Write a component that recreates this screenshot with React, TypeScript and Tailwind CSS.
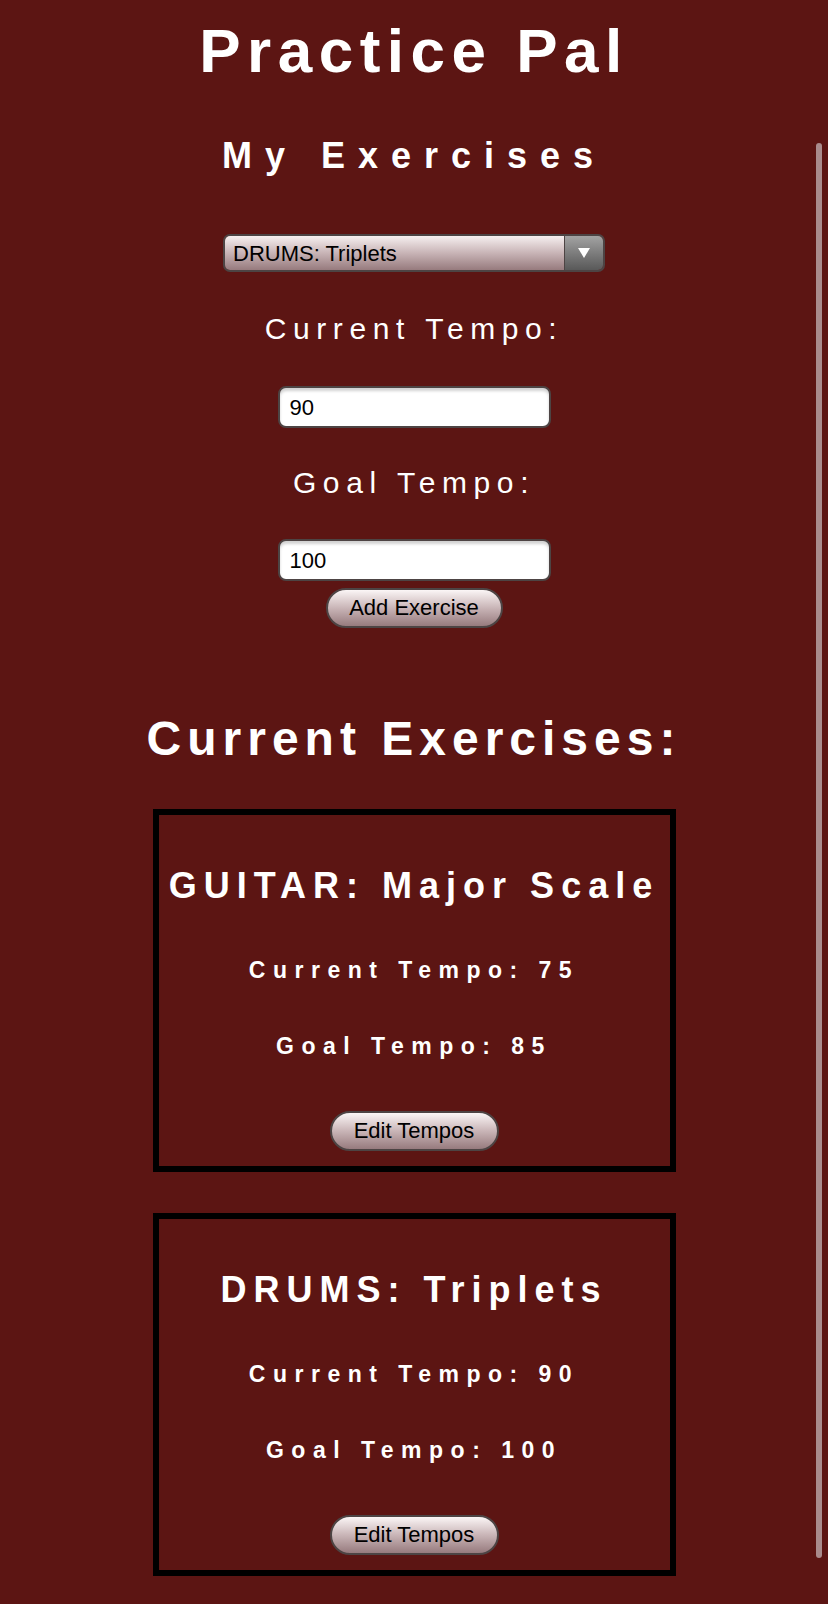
const exercises = [
  { name: "GUITAR: Major Scale", current: 75, goal: 85 },
  { name: "DRUMS: Triplets", current: 90, goal: 100 },
];

const font = "font-['Liberation_Sans',Arial,sans-serif]";

const GlossButton = ({ label, width }: { label: string; width: string }) => (
  <button
    className={`${width} h-[40px] rounded-full border-2 border-[#4d4444] bg-gradient-to-b from-[#fbf6f6] via-[#c9b5b7] to-[#977b7e] text-[22px] text-black leading-none`}
  >
    {label}
  </button>
);

const TempoInput = ({ value }: { value: string }) => (
  <div className="w-[273px] h-[42px] rounded-[8px] border-2 border-[#4d4444] bg-white shadow-[inset_0_3px_3px_rgba(0,0,0,0.18)] flex items-center pl-[10px] text-[22px] text-black">
    {value}
  </div>
);

const ExerciseCard = ({ name, current, goal }: { name: string; current: number; goal: number }) => (
  <section className="w-[523px] mx-auto border-[6px] border-black flex flex-col items-center pt-[51px] pb-[15px]">
    <h3 className="text-[36px] leading-[40px] font-bold tracking-[7px] text-white">{name}</h3>
    <p className="mt-[50px] text-[23px] leading-[28px] font-bold tracking-[7.5px] text-white">
      Current Tempo: {current}
    </p>
    <p className="mt-[48px] text-[23px] leading-[28px] font-bold tracking-[7.5px] text-white">
      Goal Tempo: {goal}
    </p>
    <div className="mt-[51px]">
      <GlossButton label="Edit Tempos" width="w-[169px]" />
    </div>
  </section>
);

export default function App() {
  return (
    <div className={`${font} relative min-h-[1604px] w-full bg-[#5c1513] pb-[26px]`}>
      <div className="flex flex-col items-center">
        <h1 className="mt-[16px] text-[62px] leading-[70px] font-bold tracking-[6.5px] text-white">Practice Pal</h1>
        <h2 className="mt-[50px] text-[36px] leading-[40px] font-bold tracking-[13px] text-white">My Exercises</h2>

        <div className="mt-[58px] w-[382px] h-[38px] rounded-[7px] border-2 border-[#4d4444] flex overflow-hidden">
          <div className="flex-1 flex items-center pl-[8px] bg-gradient-to-b from-[#f6f0f0] via-[#c8b4b6] to-[#977b7e] text-[22px] text-black">
            DRUMS: Triplets
          </div>
          <div className="w-[39px] flex items-center justify-center border-l border-[#4d4444] bg-gradient-to-b from-[#a3a3a3] to-[#595959]">
            <svg width="14" height="12" viewBox="0 0 14 12">
              <path d="M1 1 L13 1 L7 11 Z" fill="#fff" />
            </svg>
          </div>
        </div>

        <label className="mt-[40px] text-[30px] leading-[34px] tracking-[6.6px] text-white">Current Tempo:</label>
        <div className="mt-[40px]">
          <TempoInput value="90" />
        </div>

        <label className="mt-[38px] text-[30px] leading-[34px] tracking-[6.6px] text-white">Goal Tempo:</label>
        <div className="mt-[39px]">
          <TempoInput value="100" />
        </div>
        <div className="mt-[7px]">
          <GlossButton label="Add Exercise" width="w-[177px]" />
        </div>

        <h2 className="mt-[84px] text-[48px] leading-[54px] font-bold tracking-[6px] text-white">Current Exercises:</h2>
      </div>

      <div className="mt-[43px] flex flex-col gap-[41px]">
        {exercises.map((ex) => (
          <ExerciseCard key={ex.name} {...ex} />
        ))}
      </div>

      <div className="absolute right-[6px] top-[143px] w-[6px] h-[1415px] rounded-full bg-[#a98b8c]" />
    </div>
  );
}
